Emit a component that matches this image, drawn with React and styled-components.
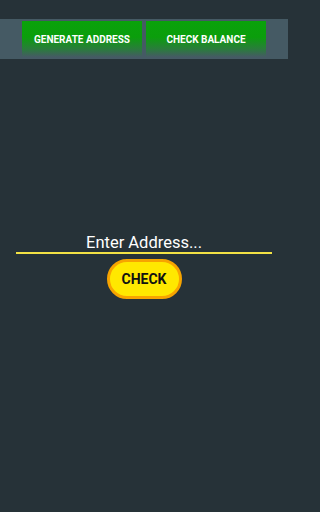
import React from 'react';
import styled, { createGlobalStyle } from 'styled-components';

const GlobalStyle = createGlobalStyle`
  html, body {
    margin: 0;
    padding: 0;
    background: #263238;
    font-family: Roboto, "Noto Sans", sans-serif;
  }
`;

// the phone screen is 288 wide, keep it fixed
const Screen = styled.div`
  width: 288px;
  min-height: 512px;
  display: flex;
  flex-direction: column;
  background: #263238;
`;

const TopBar = styled.div`
  margin-top: 19px;
  height: 40px;
  background: #455a64;
  display: flex;
  justify-content: center;
  align-items: flex-start;
  gap: 4px;
  padding-top: 2px;
  box-sizing: border-box;
`;

const BarButton = styled.button`
  width: 120px;
  height: 36px;
  border: none;
  padding: 0;
  background: linear-gradient(to bottom, #0aa20a 0%, #0b9e0c 45%, #2a7c3c 78%, #455a64 100%);
  color: #ffffff;
  font-family: Roboto, sans-serif;
  font-weight: 700;
  font-size: 10px;
  text-transform: uppercase;
  cursor: pointer;
`;

const Main = styled.div`
  display: flex;
  flex-direction: column;
  align-items: center;
  padding-top: 173px;
`;

const AddressInput = styled.input`
  width: 256px;
  height: 22px;
  box-sizing: border-box;
  background: transparent;
  border: none;
  border-bottom: 2px solid #f2e245;
  outline: none;
  padding: 0;
  color: #ffffff;
  font-family: Roboto, sans-serif;
  font-size: 16.5px;
  text-align: center;

  &::placeholder {
    color: #ffffff;
    opacity: 1;
  }
`;

const CheckButton = styled.button`
  margin-top: 5px;
  width: 75px;
  height: 40px;
  box-sizing: border-box;
  border: 3px solid #f7a400;
  border-radius: 20px;
  background: #ffe800;
  color: #111111;
  font-family: Roboto, sans-serif;
  font-weight: 700;
  font-size: 14px;
  padding: 0;
  cursor: pointer;
`;

const App = () => {
  return (
    <>
      <GlobalStyle />
      <Screen>
        <TopBar>
          <BarButton>Generate Address</BarButton>
          <BarButton>Check Balance</BarButton>
        </TopBar>
        <Main>
          <AddressInput type="text" placeholder="Enter Address..." />
          <CheckButton>CHECK</CheckButton>
        </Main>
      </Screen>
    </>
  );
};

export default App;
